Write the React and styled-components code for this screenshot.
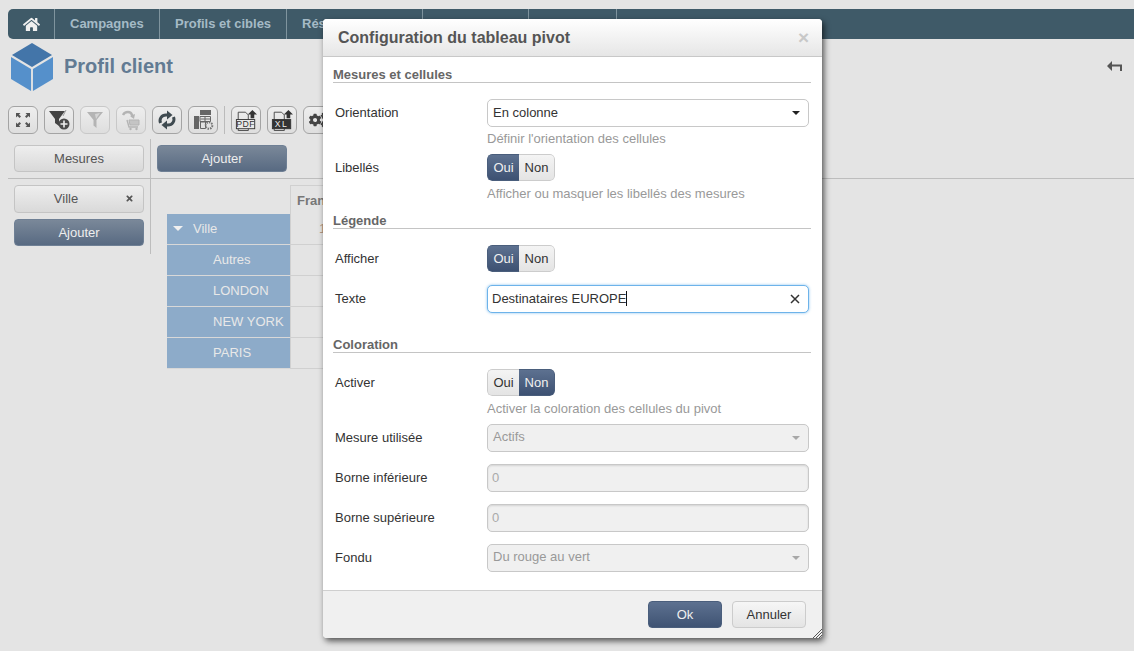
import React from 'react';
import styled, { createGlobalStyle } from 'styled-components';
import { FaHome, FaCogs, FaTimes } from 'react-icons/fa';

const GlobalStyle = createGlobalStyle`
html, body {
    margin: 0;
    padding: 0;
    background: #e4e4e4;
    font-family: "Liberation Sans", Arial, sans-serif;
    font-size: 13px;
}
* {
    box-sizing: border-box;
}
`

const ExpandIcon = () => (
    <svg width="20" height="20" viewBox="0 0 20 20" fill="#555">
        <path d="M3 3h4.500L6 4.500 8 6.500 6.500 8 4.500 6 3 7.500z" />
        <path d="M17 3h-4.500L14 4.500l-2 2L13.500 8l2-2L17 7.500z" />
        <path d="M3 17h4.500L6 15.500l2-2L6.500 12l-2 2L3 12.500z" />
        <path d="M17 17h-4.500l1.500-1.500-2-2 1.500-1.500 2 2 1.500-1.500z" />
    </svg>
)

const FilterAddIcon = () => (
    <svg width="22" height="22" viewBox="0 0 22 22">
        <path d="M1 2h16l-6 8v7l-4-3v-4z" fill="#444" />
        <path d="M15 7l3-6" stroke="#999" strokeWidth="1" />
        <circle cx="16" cy="15" r="5.500" fill="#4a4a4a" />
        <path d="M16 11.500v7M12.500 15h7" stroke="#eee" strokeWidth="1.600" />
    </svg>
)

const FilterIcon = () => (
    <svg width="20" height="20" viewBox="0 0 20 20">
        <path d="M2 2h16l-6.500 8v8l-3-2.500V10z" fill="#b4b4b4" />
        <path d="M10 4l5-1-4 6z" fill="#d4d4d4" />
    </svg>
)

const CartIcon = () => (
    <svg width="22" height="22" viewBox="0 0 22 22" fill="none" stroke="#b4b4b4">
        <path d="M3 6c2-4 8-4 9 0l1 2" strokeWidth="2.400" />
        <path d="M10 7l4 3 1-5z" fill="#b4b4b4" stroke="none" />
        <path d="M7 11l2 7h9" strokeWidth="1.400" />
        <path d="M9 11h10v5H10z" fill="#c4c4c4" strokeWidth="1" />
        <circle cx="10.500" cy="20" r="1.200" fill="#b4b4b4" stroke="none" />
        <circle cx="16.500" cy="20" r="1.200" fill="#b4b4b4" stroke="none" />
    </svg>
)

const RefreshIcon = () => (
    <svg width="20" height="20" viewBox="0 0 20 20" fill="none" stroke="#3f4a50" strokeWidth="3">
        <path d="M3.500 13C2 9 4.500 5 9 5h2" />
        <path d="M10 0.500l5.500 4.500-5.500 4.500z" fill="#3f4a50" stroke="none" />
        <path d="M16.500 7c1.500 4-1 8-5.500 8H9" />
        <path d="M10 10.500l-5.500 4.500 5.500 4.500z" fill="#3f4a50" stroke="none" />
    </svg>
)

const PivotIcon = () => (
    <svg width="22" height="22" viewBox="0 0 22 22">
        <path d="M8 1h11v5H8z" fill="#666" />
        <path d="M2 7h5v13H2z" fill="#666" />
        <path d="M8 7.500h10.500v5H8zM8.500 13h5v6.500h-5z" fill="none" stroke="#666" />
        <path d="M8.500 10h10M13 7v5" stroke="#666" />
        <circle cx="17" cy="16.500" r="3.300" fill="none" stroke="#777" strokeWidth="2" strokeDasharray="1.500 1" />
    </svg>
)

const ExportIcon = ({ label, dark }) => (
    <svg width="22" height="22" viewBox="0 0 24 24">
        <path d="M3.500 3.500h8l3 3v17h-11z" fill="none" stroke="#444" />
        <path d="M17 10V6h-3l5-5 5 5h-3v4z" fill="#333" />
        <rect x="1.500" y="11.500" width="20" height="10" fill={dark ? '#333' : '#e8e8e8'} stroke="#333" />
        <text x="11.500" y="20" textAnchor="middle" fontSize="9.500" letterSpacing={dark ? '1.500' : '0.500'} fill={dark ? '#eee' : '#333'} fontFamily="Liberation Sans, sans-serif">{label}</text>
    </svg>
)

const toolButtons = [
    { id: 'expand', icon: <ExpandIcon /> },
    { id: 'filterAdd', icon: <FilterAddIcon /> },
    { id: 'filter', icon: <FilterIcon />, off: true },
    { id: 'cart', icon: <CartIcon />, off: true },
    { id: 'refresh', icon: <RefreshIcon /> },
    { id: 'pivot', icon: <PivotIcon /> },
]

const navItems = [
    { label: 'Campagnes', width: 105 },
    { label: 'Profils et cibles', width: 127 },
    { label: 'Réseaux sociaux', width: 136 },
    { label: 'Opérations', width: 106 },
    { label: 'Rapports', width: 88 },
]
const cities = ['Autres', 'LONDON', 'NEW YORK', 'PARIS']

const Toggle = ({ on }) => (
    <ToggleWrap>
        <ToggleSide $first $active={on}>Oui</ToggleSide>
        <ToggleSide $active={!on}>Non</ToggleSide>
    </ToggleWrap>
)

const App = () => {
    return (
        <Page>
            <GlobalStyle />
            <Nav>
                <NavHome><FaHome size={17} /></NavHome>
                {navItems.map(item => <NavItem key={item.label} $width={item.width}>{item.label}</NavItem>)}
            </Nav>
            <TitleRow>
                <svg width="42" height="48" viewBox="0 0 44 48" preserveAspectRatio="none">
                    <path d="M22 0l21 12-21 12L1 12z" fill="#4375a9" />
                    <path d="M0 14l21 12v22L0 36z" fill="#5590cb" />
                    <path d="M44 14L23 26v22l21-12z" fill="#5590cb" />
                </svg>
                <PageTitle>Profil client</PageTitle>
                <BackArrow>
                    <svg width="15" height="10" viewBox="0 0 15 10">
                        <path d="M0 5l5-5v3.500h10V10h-2V5.500H5V10z" fill="#555" />
                    </svg>
                </BackArrow>
            </TitleRow>
            <Toolbar>
                {toolButtons.map(b => <ToolButton key={b.id} $off={b.off}>{b.icon}</ToolButton>)}
                <ToolSep />
                <ToolButton><ExportIcon label="PDF" /></ToolButton>
                <ToolButton><ExportIcon label="XL" dark /></ToolButton>
                <ToolButton><FaCogs size={18} color="#444" /></ToolButton>
            </Toolbar>
            <TopBand>
                <SideCell>
                    <LightButton>Mesures</LightButton>
                </SideCell>
                <TopRight>
                    <DarkButton>Ajouter</DarkButton>
                </TopRight>
            </TopBand>
            <Content>
                <SideColumn>
                    <ChipButton>
                        Ville
                        <RemoveMark><FaTimes size={9} /></RemoveMark>
                    </ChipButton>
                    <DarkButton>Ajouter</DarkButton>
                </SideColumn>
                <PivotTable>
                    <PivotHeadRow>
                        <ColumnHead>France</ColumnHead>
                    </PivotHeadRow>
                    <PivotRow>
                        <RowHead>
                            <Triangle />
                            Ville
                        </RowHead>
                        <DataCell>1 245</DataCell>
                    </PivotRow>
                    {cities.map(city => (
                        <PivotRow key={city}>
                            <RowHead $child>{city}</RowHead>
                            <DataCell />
                        </PivotRow>
                    ))}
                </PivotTable>
            </Content>

            <Modal>
                <ModalHeader>
                    <ModalTitle>Configuration du tableau pivot</ModalTitle>
                    <CloseMark>×</CloseMark>
                </ModalHeader>
                <ModalBody>
                    <SectionTitle>Mesures et cellules</SectionTitle>
                    <FormRow $helped>
                        <FieldLabel>Orientation</FieldLabel>
                        <SelectBox>En colonne<SelectArrow /></SelectBox>
                    </FormRow>
                    <HelpText>Définir l'orientation des cellules</HelpText>
                    <FormRow $helped>
                        <FieldLabel>Libellés</FieldLabel>
                        <Toggle on />
                    </FormRow>
                    <HelpText $last>Afficher ou masquer les libellés des mesures</HelpText>

                    <SectionTitle>Légende</SectionTitle>
                    <FormRow>
                        <FieldLabel>Afficher</FieldLabel>
                        <Toggle on />
                    </FormRow>
                    <FormRow $spaced>
                        <FieldLabel>Texte</FieldLabel>
                        <FocusedInput>
                            Destinataires EUROPE<Caret />
                            <ClearMark>
                                <svg width="10" height="10" viewBox="0 0 10 10">
                                    <path d="M1 1l8 8M9 1L1 9" stroke="#333" strokeWidth="1.500" />
                                </svg>
                            </ClearMark>
                        </FocusedInput>
                    </FormRow>

                    <SectionTitle>Coloration</SectionTitle>
                    <FormRow $helped>
                        <FieldLabel>Activer</FieldLabel>
                        <Toggle />
                    </FormRow>
                    <HelpText>Activer la coloration des cellules du pivot</HelpText>
                    <FormRow>
                        <FieldLabel>Mesure utilisée</FieldLabel>
                        <SelectBox $disabled>Actifs<SelectArrow $disabled /></SelectBox>
                    </FormRow>
                    <FormRow>
                        <FieldLabel>Borne inférieure</FieldLabel>
                        <DisabledInput>0</DisabledInput>
                    </FormRow>
                    <FormRow>
                        <FieldLabel>Borne supérieure</FieldLabel>
                        <DisabledInput>0</DisabledInput>
                    </FormRow>
                    <FormRow $helped>
                        <FieldLabel>Fondu</FieldLabel>
                        <SelectBox $disabled>Du rouge au vert<SelectArrow $disabled /></SelectBox>
                    </FormRow>
                </ModalBody>
                <ModalFooter>
                    <OkButton>Ok</OkButton>
                    <CancelButton>Annuler</CancelButton>
                    <Grip>
                        <svg width="9" height="9" viewBox="0 0 9 9" stroke="#555">
                            <path d="M0 9l9-9M3 9l6-6M6 9l3-3" />
                        </svg>
                    </Grip>
                </ModalFooter>
            </Modal>
        </Page>
    )
}

const Page = styled.div`
position: relative;
height: 651px;
padding-top: 9px;
overflow: hidden;
background: #e4e4e4;
`

const Nav = styled.div`
display: flex;
height: 30px;
margin-left: 8px;
background: #3f5a68;
border-radius: 5px 0 0 5px;
`

const NavHome = styled.div`
width: 47px;
display: flex;
justify-content: center;
align-items: center;
color: #f0f0f0;
border-right: 1px solid #7f949e;
`

const NavItem = styled.div`
width: ${props => props.$width}px;
padding-left: 15px;
line-height: 29px;
font-weight: bold;
color: #a5bac6;
white-space: nowrap;
border-right: 1px solid #7f949e;
`

const TitleRow = styled.div`
display: flex;
align-items: flex-start;
height: 67px;
padding: 4px 12px 0 11px;
`

const PageTitle = styled.h1`
margin: 11px 0 0 11px;
font-size: 20px;
line-height: 24px;
font-weight: bold;
color: #627b93;
`

const BackArrow = styled.div`
margin: 16px 0 0 auto;
`

const Toolbar = styled.div`
display: flex;
align-items: center;
gap: 6px;
height: 28px;
margin-left: 8px;
`

const ToolButton = styled.div`
width: 30px;
height: 28px;
display: flex;
justify-content: center;
align-items: center;
overflow: hidden;
border: 1px solid ${props => props.$off ? '#c8c8c8' : '#a4a4a4'};
border-radius: 6px;
background: linear-gradient(#eeeeee, #dedede);
`

const ToolSep = styled.div`
width: 1px;
height: 28px;
background: #bbb;
`

const TopBand = styled.div`
display: flex;
height: 40px;
margin: 5px 0 0 8px;
border-bottom: 1px solid #bdbdbd;
`

const SideCell = styled.div`
width: 143px;
padding: 6px 6px 0;
border-right: 1px solid #bdbdbd;
`

const TopRight = styled.div`
width: 143px;
padding: 6px 6px 0;
`

const Content = styled.div`
display: flex;
margin-left: 8px;
`

const SideColumn = styled.div`
width: 143px;
height: 75px;
padding: 6px 6px 0;
display: flex;
flex-direction: column;
gap: 6px;
border-right: 1px solid #bdbdbd;
`

const BaseButton = styled.div`
position: relative;
width: 130px;
height: 27px;
line-height: 25px;
text-align: center;
border-radius: 4px;
`

const LightButton = styled(BaseButton)`
color: #555;
border: 1px solid #c4c4c4;
background: linear-gradient(#eeeeee, #d9d9d9);
`

const ChipButton = styled(LightButton)`
height: 28px;
line-height: 26px;
padding-right: 26px;
`

const DarkButton = styled(BaseButton)`
color: #eeeeee;
border: 1px solid #6f8095;
background: linear-gradient(#7a8899, #586a82);
`

const RemoveMark = styled.span`
position: absolute;
right: 9px;
top: 8px;
line-height: 9px;
color: #555;
`

const PivotTable = styled.div`
margin: 6px 0 0 16px;
`

const PivotHeadRow = styled.div`
display: flex;
height: 29px;
padding-left: 123px;
`

const ColumnHead = styled.div`
width: 110px;
padding-left: 6px;
line-height: 29px;
font-weight: bold;
color: #777;
border: 1px solid #d0d0d0;
border-right: none;
border-bottom: none;
`

const PivotRow = styled.div`
display: flex;
height: 31px;
`

const RowHead = styled.div`
width: 123px;
display: flex;
align-items: center;
padding-left: ${props => props.$child ? '46px' : '6px'};
padding-bottom: 1px;
color: #e8e8e8;
background: #8dabc9;
border-bottom: 1px solid #d8d8d8;
white-space: nowrap;
`

const Triangle = styled.span`
width: 0;
height: 0;
margin-right: 10px;
border-left: 5px solid transparent;
border-right: 5px solid transparent;
border-top: 5px solid #f0f0f0;
`

const DataCell = styled.div`
width: 110px;
padding: 7px 0 0 28px;
color: #b39a85;
white-space: nowrap;
border: 1px solid #d0d0d0;
border-top: none;
border-right: none;
`

const Modal = styled.div`
position: absolute;
left: 323px;
top: 19px;
width: 499px;
height: 619px;
display: flex;
flex-direction: column;
background: #fff;
border-radius: 4px;
box-shadow: 2px 3px 6px rgba(0, 0, 0, 0.65);
`

const ModalHeader = styled.div`
height: 38px;
display: flex;
justify-content: space-between;
align-items: center;
padding: 0 13px 0 15px;
background: linear-gradient(#ffffff, #e6e6e6);
border-bottom: 1px solid #c8c8c8;
border-radius: 4px 4px 0 0;
`

const ModalTitle = styled.div`
font-size: 16px;
font-weight: bold;
color: #555;
`

const CloseMark = styled.div`
font-size: 19px;
font-weight: bold;
color: #c8c8c8;
`

const ModalBody = styled.div`
flex: 1;
padding: 9px 11px 0 10px;
`

const SectionTitle = styled.h3`
height: 17px;
margin: 0 0 16px;
font-size: 13px;
line-height: 18px;
font-weight: bold;
color: #666;
border-bottom: 1px solid #c4c4c4;
`

const FormRow = styled.div`
display: flex;
align-items: center;
height: 28px;
padding-left: 2px;
margin-bottom: ${props => props.$helped ? '0' : props.$spaced ? '23px' : '12px'};
`

const FieldLabel = styled.div`
width: 152px;
padding-bottom: 2px;
color: #333;
`

const HelpText = styled.div`
height: 16px;
line-height: 16px;
margin: 4px 0 ${props => props.$last ? '10px' : '7px'} 154px;
color: #999;
`

const Field = styled.div`
position: relative;
width: 322px;
height: 28px;
line-height: 26px;
border-radius: 5px;
`

const SelectBox = styled(Field)`
padding-left: 5px;
line-height: ${props => props.$disabled ? '24px' : '26px'};
color: ${props => props.$disabled ? '#999' : '#333'};
background: ${props => props.$disabled ? '#f0f0f0' : '#fff'};
border: 1px solid #c8c8c8;
`

const SelectArrow = styled.span`
position: absolute;
right: 8px;
top: 11px;
border-left: 4px solid transparent;
border-right: 4px solid transparent;
border-top: 4px solid ${props => props.$disabled ? '#a8a8a8' : '#222'};
`

const FocusedInput = styled(Field)`
padding-left: 4px;
color: #333;
background: #fff;
border: 1px solid #6db3ea;
box-shadow: 0 0 3px rgba(109, 179, 234, 0.8);
`

const Caret = styled.span`
display: inline-block;
width: 1px;
height: 15px;
vertical-align: -3px;
background: #111;
`

const ClearMark = styled.span`
position: absolute;
right: 8px;
top: 8px;
line-height: 10px;
`

const DisabledInput = styled(Field)`
padding-left: 4px;
color: #aaa;
background: #f0f0f0;
border: 1px solid #c8c8c8;
box-shadow: inset 0 1px 2px rgba(0, 0, 0, 0.12);
`

const ToggleWrap = styled.div`
display: flex;
height: 27px;
margin-bottom: 1px;
border-radius: 5px;
overflow: hidden;
`

const ToggleSide = styled.div`
width: ${props => props.$first ? '32px' : '36px'};
line-height: 26px;
text-align: center;
color: ${props => props.$active ? '#f0f0f0' : '#333'};
background: ${props => props.$active ? 'linear-gradient(#5d7190, #3d5172)' : 'linear-gradient(#f4f4f4, #e4e4e4)'};
border: 1px solid ${props => props.$active ? '#4a5e7c' : '#cccccc'};
border-left-width: ${props => props.$first ? '1px' : '0'};
border-right-width: ${props => props.$first ? '0' : '1px'};
border-radius: ${props => props.$first ? '5px 0 0 5px' : '0 5px 5px 0'};
`

const ModalFooter = styled.div`
position: relative;
height: 48px;
display: flex;
justify-content: flex-end;
gap: 10px;
padding: 10px 16px 0 0;
background: #f0f0f0;
border-top: 1px solid #cfcfcf;
border-radius: 0 0 4px 4px;
`

const FooterButton = styled.div`
width: 74px;
height: 27px;
line-height: 25px;
text-align: center;
border-radius: 4px;
`

const OkButton = styled(FooterButton)`
color: #f0f0f0;
border: 1px solid #4a5e7c;
background: linear-gradient(#5d7190, #3f5373);
`

const CancelButton = styled(FooterButton)`
color: #333;
border: 1px solid #cccccc;
background: linear-gradient(#f6f6f6, #e4e4e4);
`

const Grip = styled.div`
position: absolute;
right: 0;
bottom: 0;
line-height: 0;
`

export default App
